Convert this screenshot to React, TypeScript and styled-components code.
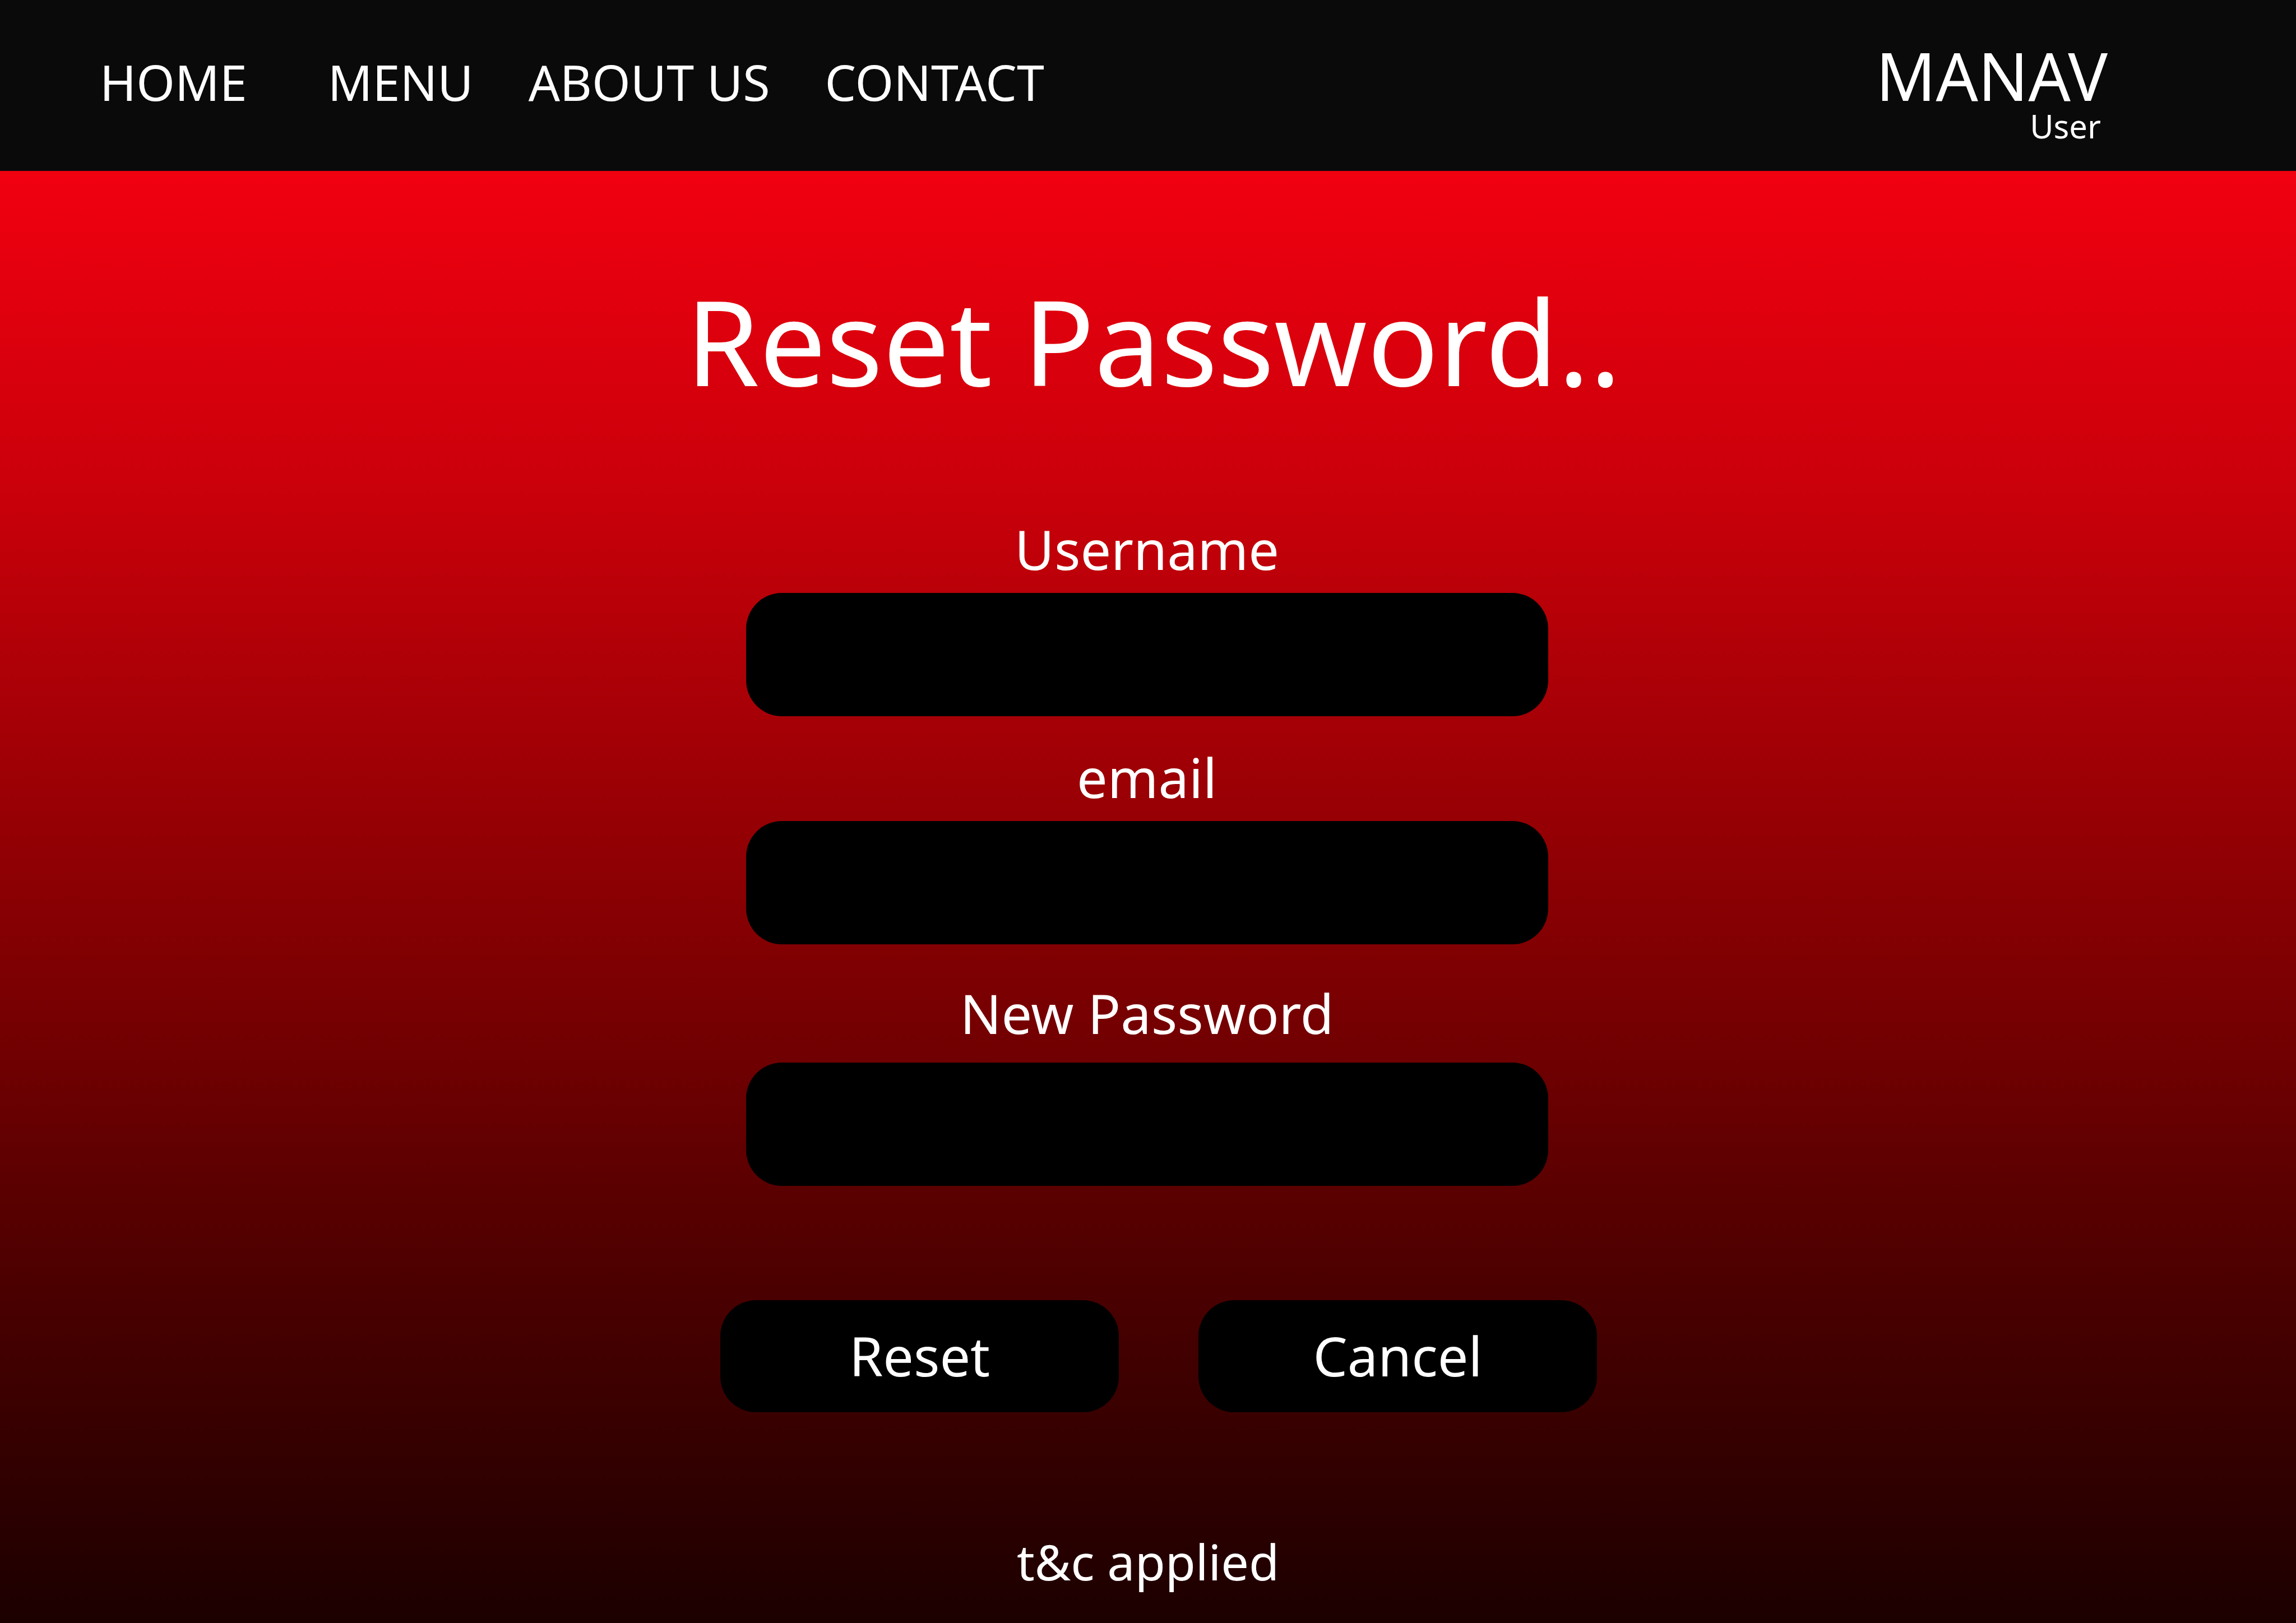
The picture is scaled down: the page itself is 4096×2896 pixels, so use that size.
import React from 'react';
import styled, { createGlobalStyle } from 'styled-components';

const GlobalStyle = createGlobalStyle`
  * {
    box-sizing: border-box;
  }
  body {
    margin: 0;
    background: #1c0000;
    color: #ffffff;
    font-family: 'Noto Sans', 'Open Sans', sans-serif;
  }
`;

const Page = styled.div`
  min-height: 100vh;
  display: flex;
  flex-direction: column;
  background: linear-gradient(
    to bottom,
    #ff0012 0%,
    #f00010 11%,
    #c8000a 31%,
    #800002 59%,
    #4c0000 79%,
    #1c0000 100%
  );
`;

const Header = styled.header`
  display: flex;
  justify-content: space-between;
  align-items: baseline;
  padding: 75px 336px 50px 178px;
  background: #0a0a0a;
`;

const Nav = styled.nav`
  display: flex;
  gap: 98px;
`;

const NavLink = styled.a`
  color: inherit;
  font-size: 88px;
  line-height: 100px;
  text-decoration: none;
  white-space: nowrap;

  &:first-child {
    margin-right: 46px;
  }
`;

const Account = styled.div`
  display: flex;
  flex-direction: column;
  align-items: flex-end;
`;

const AccountName = styled.span`
  font-size: 118px;
  line-height: 120px;
`;

const AccountRole = styled.span`
  padding-right: 12px;
  font-size: 58px;
  line-height: 60px;
`;

const Main = styled.main`
  flex: 1;
  display: flex;
  flex-direction: column;
  align-items: center;
  padding: 160px 48px 48px;
`;

const Title = styled.h1`
  margin: 0 0 164px;
  padding-left: 20px;
  font-size: 211px;
  font-weight: 400;
  line-height: 284px;
  text-align: center;
`;

const Form = styled.form`
  width: 100%;
  display: flex;
  flex-direction: column;
  align-items: center;
  padding-right: 4px;
`;

const Field = styled.div<{ $gap: number; $space: number }>`
  width: 1431px;
  max-width: 100%;
  display: flex;
  flex-direction: column;
  align-items: center;
  gap: ${(p) => p.$gap}px;
  margin-bottom: ${(p) => p.$space}px;
`;

const Label = styled.label`
  font-size: 97px;
  line-height: 132px;
`;

const Input = styled.input`
  width: 100%;
  height: 220px;
  padding: 0 64px;
  border: 0;
  border-radius: 64px;
  background: #000000;
  color: #ffffff;
  font-family: inherit;
  font-size: 97px;
`;

const Actions = styled.div`
  display: flex;
  gap: 142px;
  padding-left: 42px;
`;

const Button = styled.button`
  width: 711px;
  height: 200px;
  padding: 0 0 4px;
  border: 0;
  border-radius: 64px;
  background: #000000;
  color: #ffffff;
  font-family: inherit;
  font-size: 97px;
  line-height: 132px;
  cursor: pointer;
`;

const Terms = styled.p`
  margin: 206px 0 0;
  font-size: 88px;
  line-height: 120px;
`;

const links = ['HOME', 'MENU', 'ABOUT US', 'CONTACT'];

const fields = [
  { id: 'username', label: 'Username', type: 'text', gap: 13, space: 42 },
  { id: 'email', label: 'email', type: 'email', gap: 13, space: 56 },
  { id: 'new-password', label: 'New Password', type: 'password', gap: 23, space: 204 },
];

export default function App() {
  return (
    <>
      <GlobalStyle />
      <Page>
        <Header>
          <Nav>
            {links.map((link) => (
              <NavLink key={link} href="#">
                {link}
              </NavLink>
            ))}
          </Nav>
          <Account>
            <AccountName>MANAV</AccountName>
            <AccountRole>User</AccountRole>
          </Account>
        </Header>
        <Main>
          <Title>Reset Password..</Title>
          <Form onSubmit={(e) => e.preventDefault()}>
            {fields.map((f) => (
              <Field key={f.id} $gap={f.gap} $space={f.space}>
                <Label htmlFor={f.id}>{f.label}</Label>
                <Input id={f.id} name={f.id} type={f.type} />
              </Field>
            ))}
            <Actions>
              <Button type="submit">Reset</Button>
              <Button type="button">Cancel</Button>
            </Actions>
          </Form>
          <Terms>t&amp;c applied</Terms>
        </Main>
      </Page>
    </>
  );
}
